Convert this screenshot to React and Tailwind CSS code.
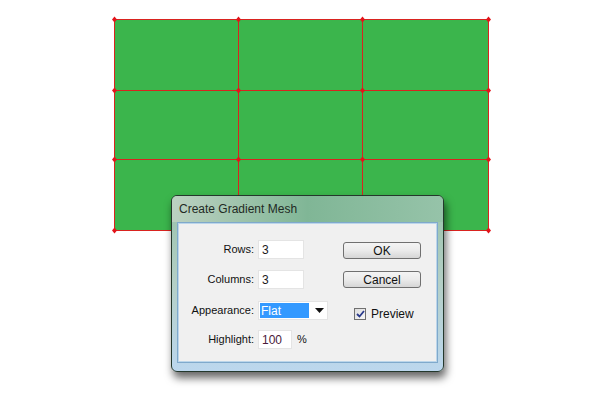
import React from 'react'

const XS = [114, 238, 362, 488]
const YS = [19, 90, 159, 230]

function Mesh() {
  return (
    <svg width="600" height="415" className="block">
      <rect x={XS[0]} y={YS[0]} width={XS[3] - XS[0]} height={YS[3] - YS[0]} fill="#3bb54c" />
      {XS.map(x => (
        <rect key={'x' + x} x={x} y={YS[0]} width="1" height={YS[3] - YS[0]} fill="#d9231f" shapeRendering="crispEdges" />
      ))}
      {YS.map(y => (
        <rect key={'y' + y} x={XS[0]} y={y} width={XS[3] - XS[0] + 1} height="1" fill="#d9231f" shapeRendering="crispEdges" />
      ))}
      {XS.map(x => YS.map(y => (
        <polygon
          key={x + '-' + y}
          points={`${x + 0.5},${y - 2.5} ${x + 3},${y + 0.5} ${x + 0.5},${y + 3.5} ${x - 2},${y + 0.5}`}
          fill="#e3141a"
        />
      )))}
    </svg>
  )
}

function Field({ label, value, width = 'w-[46px]', color = 'text-[#1a1a1a]', className = '' }) {
  return (
    <div className={`flex items-center h-[19px] ${className}`}>
      <span className="w-[75px] text-right">{label}</span>
      <div className={`ml-[4px] h-[19px] ${width} bg-white border border-[#e4e4e4] flex items-center pl-[3px] text-[12px] ${color}`}>
        {value}
      </div>
    </div>
  )
}

function Button({ children, className = '' }) {
  return (
    <div className={`w-[78px] h-[17px] rounded-[3px] border border-[#707070] bg-gradient-to-b from-[#f4f4f4] via-[#ebebeb] to-[#d6d6d6] flex items-center justify-center text-[12px] text-[#111] ${className}`}>
      {children}
    </div>
  )
}

function Dialog() {
  return (
    <div className="absolute left-[171px] top-[195px] w-[273px] h-[177px] rounded-[6px] border border-[#24382c] overflow-hidden bg-gradient-to-b from-[#98c2aa] via-[#b4cfc6] to-[#bcd7ee] shadow-[2px_6px_9px_rgba(0,0,0,0.6)] flex flex-col">
      <div className="h-[26px] flex items-center pl-[7px] text-[12px] text-[#1f2a24] bg-gradient-to-r from-[#bcd1c2] via-[#80b696] to-[#96c3a9]">
        Create Gradient Mesh
      </div>
      <div className="flex-1 mx-[5px] mb-[8px] border border-[#7fa9cc] bg-[#bcd6ea] p-[1px]">
        <div className="w-full h-full bg-[#f0f0f0] flex pt-[16px] text-[11px] text-[#111]">
          <div className="flex flex-col">
            <Field label="Rows:" value="3" />
            <Field label="Columns:" value="3" className="mt-[11px]" />
            <div className="flex items-center h-[19px] mt-[12px]">
              <span className="w-[75px] text-right">Appearance:</span>
              <div className="ml-[4px] h-[19px] w-[70px] bg-white border border-[#e4e4e4] flex items-center">
                <div className="ml-[1px] h-[15px] w-[49px] bg-[#3399ff] text-white flex items-center pl-[1px] text-[12px]">Flat</div>
                <svg width="9" height="5" viewBox="0 0 9 5" className="ml-[6px]">
                  <polygon points="0,0 9,0 4.5,5" fill="#111" />
                </svg>
              </div>
            </div>
            <div className="flex items-center h-[19px] mt-[10px]">
              <Field label="Highlight:" value="100" width="w-[34px]" color="text-[#4a1a3a]" />
              <span className="ml-[5px] text-[11px]">%</span>
            </div>
          </div>
          <div className="flex flex-col ml-[15px] pt-[2px]">
            <Button>OK</Button>
            <Button className="mt-[12px]">Cancel</Button>
            <div className="flex items-center mt-[17px] ml-[11px]">
              <div className="w-[12px] h-[12px] border border-[#707070] bg-gradient-to-br from-[#dcdcdc] to-[#f8f8f8] flex items-center justify-center">
                <svg width="9" height="8" viewBox="0 0 9 8">
                  <polyline points="1,4 3.5,6.5 8,1" fill="none" stroke="#2a3a8c" strokeWidth="1.8" />
                </svg>
              </div>
              <span className="ml-[5px] text-[12px]">Preview</span>
            </div>
          </div>
        </div>
      </div>
    </div>
  )
}

export default function App() {
  return (
    <div className="relative w-[600px] h-[415px] bg-white overflow-hidden font-['Liberation_Sans',Arial,sans-serif]">
      <Mesh />
      <Dialog />
    </div>
  )
}
